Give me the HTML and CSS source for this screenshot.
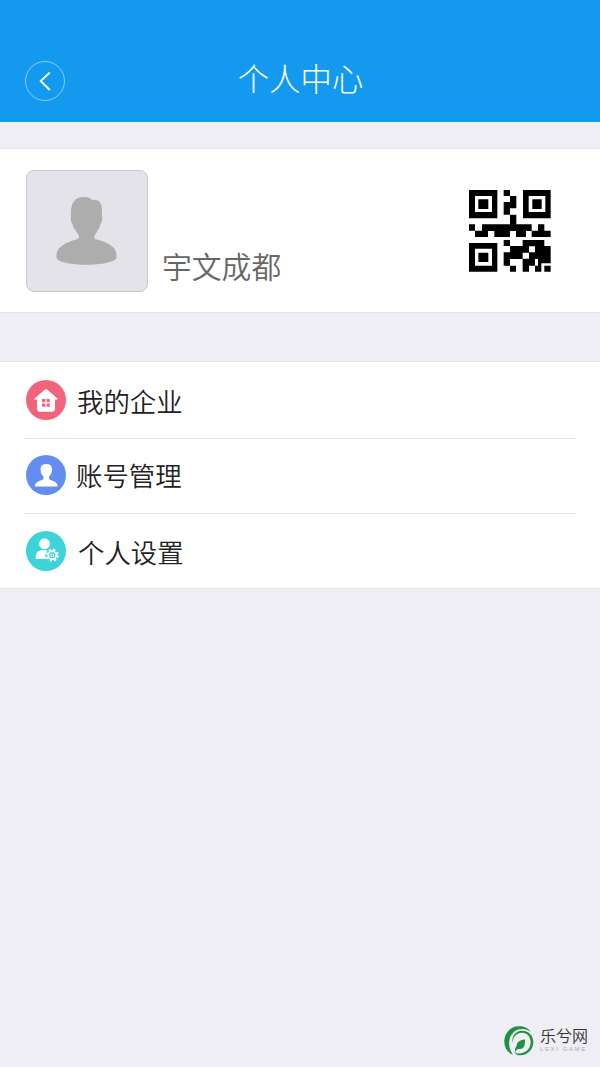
FILE: index.html
```
<!DOCTYPE html>
<html lang="zh-CN">

<head>
    <meta charset="UTF-8">
    <meta name="viewport" content="width=device-width, initial-scale=1.0">
    <title>个人中心</title>
    <link rel="stylesheet" href="styles.css">
</head>

<body>
    <header class="header">
        <a class="back" href="#">
            <svg viewBox="0 0 40 40"><path d="M25 11L15.5 20L25 29.5" /></svg>
        </a>
        <h1>个人中心</h1>
    </header>

    <section class="profile">
        <div class="avatar">
            <svg viewBox="27 11 120 120">
                <path d="M78 79Q80 77 78 74L74.5 69Q73 67 72.5 64Q70 61 71 57C70 44 74 37 84 37C88 37 91 38 92 40C99 39 102 43 102 51V56Q103 61 100.5 64Q100 67 98.5 69L95 75Q93.5 77 95 79C108 82 116.5 87 116.5 95V98C113 107 60 107 56.5 98V95C56.5 87 66 82 78 79Z" />
            </svg>
        </div>
        <p class="name">宇文成都</p>
        <svg class="qrcode" viewBox="27 30 246 246">
            <!-- 三个定位角 -->
            <path fill-rule="evenodd" d="M27 30H112V115H27ZM45 48V96H96V48ZM55 58H85V87H55Z" />
            <path fill-rule="evenodd" d="M189 30H272V115H189ZM206 48V96H256V48ZM217 58H245V87H217Z" />
            <path fill-rule="evenodd" d="M27 189H112V275H27ZM45 206V257H96V206ZM55 218H85V246H55Z" />
            <path d="M131 30h19v18h-19zM150 48h19v19h-19zM131 66h19v38h-19zM150 66h19v19h-19zM150 104h19v30h-19z" />
            <path d="M27 133h18v19H27zM66 133h149v20H66zM234 133h19v20h-19zM45 152h39v19H45zM103 152h47v19h-47zM168 152h30v19h-30zM215 152h57v19h-57z" />
            <path d="M131 180h19v18h-19zM188 180h65v19h-65zM150 198h57v20h-57zM225 198h47v20h-47zM131 217h57v20h-57zM207 217h65v20h-65z" />
            <path d="M131 236h19v21h-19zM188 236h37v21h-37zM234 236h38v14h-38zM234 250h10v25h-10zM150 257h18v18h-18zM188 257h19v18h-19zM225 257h10v18h-10zM253 257h19v18h-19z" />
        </svg>
    </section>

    <ul class="menu">
        <li>
            <svg class="icon" viewBox="0 0 40 40">
                <circle cx="20" cy="20" r="20" fill="#f1647b" />
                <path fill="#fff" d="M19 9.5Q20 8.6 21 9.5L31.4 18.4Q32.2 19.6 30.6 19.6H29V28.5Q29 31.8 25.8 31.8H14.2Q11 31.8 11 28.5V19.6H9.4Q7.8 19.6 8.6 18.4Z" />
                <path fill="#f1647b" d="M16 19h3.3v3.3H16zM20.5 19h3.3v3.3h-3.3zM16 23.4h3.3v3.3H16zM20.5 23.4h3.3v3.3h-3.3z" />
            </svg>
            <span>我的企业</span>
        </li>
        <li class="account">
            <svg class="icon" viewBox="0 0 40 40">
                <circle cx="20" cy="20" r="20" fill="#638ef0" />
                <path fill="#fff" d="M17.5 24V21.5C15.5 20 15.2 18 14.8 16.5C14 12 15.5 9 20.3 9S26.6 12 25.8 16.5C25.4 18 25 20 23.1 21.5V24C25 26 31.8 26 31.8 31.5H8.8C8.8 26 15.6 26 17.5 24Z" />
            </svg>
            <span>账号管理</span>
        </li>
        <li class="setting">
            <svg class="icon" viewBox="0 0 40 40">
                <circle cx="20" cy="20" r="20" fill="#3dd3d9" />
                <circle cx="18.5" cy="12.7" r="5.4" fill="#fff" />
                <path fill="#fff" d="M14.5 19.3H21.5Q19 22.4 19.4 24.8Q19.7 27 21.2 28H9.8C9.4 23.6 11 20 14.5 19.3Z" />
                <circle cx="26.3" cy="24.2" r="5.5" fill="none" stroke="#fff" stroke-width="1.8" stroke-dasharray="2.4 1.92" />
                <circle cx="26.3" cy="24.2" r="4" fill="none" stroke="#fff" stroke-width="1.7" />
                <circle cx="26.3" cy="24.2" r="1.5" fill="none" stroke="#fff" stroke-width="1" />
            </svg>
            <span>个人设置</span>
        </li>
    </ul>

    <footer class="logo">
        <svg viewBox="0 0 30 30">
            <path d="M9 28.8C3 26.5 0 21 .3 14.5C.8 6 7.5 .3 15 .3C20 .3 24.5 2.3 27 6C22 2.2 14 2 9.5 6.2C3.6 12 3.8 22 9 28.8Z" />
            <path d="M8.6 17C7.2 10 12 4.7 18 4.7C24.5 4.7 29.3 9.5 29.3 16C29.3 23.5 23.5 29.3 16.5 29.3C13.4 29.3 11 27.8 10 25.4C12.2 27.2 14.5 27.8 17 27.3C22.6 26.5 26.8 21.8 26.7 16C26.6 10.5 22.8 6.7 17.8 6.8C12.4 6.9 8.8 11 8.6 17Z" />
            <path d="M20.8 13.2C21.4 18.5 20.3 23 15.8 23C14.2 23 13.6 22.5 12.8 23.6L11.3 26C10.5 23.5 11.3 21.5 12.6 20.2C12.6 16 16 14.3 20.8 13.2Z" />
        </svg>
        <div class="logo-text">
            <strong>乐兮网</strong>
            <small>LEXI GAME</small>
        </div>
    </footer>
</body>

</html>
```

FILE: styles.css
```
* {
    padding: 0;
    margin: 0;
    box-sizing: border-box;
}

body {
    display: flex;
    flex-direction: column;
    height: 1067px;
    background-color: #efeef4;
    font-family: "Noto Sans CJK SC", sans-serif;
    font-weight: 300;
}

svg {
    display: block;
}

.header {
    display: grid;
    grid-template-columns: 40px 1fr 40px;
    align-items: center;
    height: 122px;
    padding: 40px 25px 0;
    background-color: #139aef;
    color: #fff;
}

.back {
    height: 40px;
    border: 1px solid #89ccf7;
    border-radius: 50%;
}

.back path {
    fill: none;
    stroke: #fff;
    stroke-width: 2;
}

h1 {
    padding: 0 0 7px 1px;
    font-size: 31.4px;
    font-weight: 300;
    text-align: center;
}

.profile {
    display: flex;
    height: 165px;
    margin-top: 26px;
    padding: 21px 49px 0 26px;
    border-top: 1px solid #e3e2e6;
    border-bottom: 1px solid #e3e2e6;
    background-color: #fff;
}

.avatar {
    width: 122px;
    height: 122px;
    border: 1px solid #c9c9cc;
    border-radius: 8px;
    background-color: #e4e3e9;
}

.avatar path {
    fill: #adadad;
}

.name {
    margin: 73px 0 0 14px;
    font-size: 29.8px;
    font-weight: 350;
    color: #666;
}

.qrcode {
    width: 82px;
    height: 82px;
    margin: 20px 0 0 auto;
}

.menu {
    height: 228px;
    margin-top: 48px;
    padding: 0 25px;
    border-top: 1px solid #e3e2e6;
    border-bottom: 1px solid #e3e2e6;
    background-color: #fff;
    list-style: none;
}

.menu li {
    display: flex;
    align-items: center;
    height: 76px;
    padding: 0 0 1px 1px;
    font-size: 26.4px;
    font-weight: 350;
    color: #222;
}

.menu li + li {
    height: 75px;
    border-top: 1px solid #e3e3e5;
}

.icon {
    width: 40px;
    height: 40px;
    margin-right: 11px;
}

.menu span {
    padding-top: 1px;
}

.menu .account {
    padding-bottom: 2px;
}

.account .icon {
    margin-right: 10px;
}

.menu .account span {
    padding: 0 0 1px;
}

.setting .icon {
    margin-right: 12px;
}

.logo {
    display: flex;
    align-items: flex-start;
    margin: auto 11px 11px auto;
}

.logo svg {
    width: 30px;
    height: 30px;
    margin-right: 6px;
    fill: #1f9140;
}

.logo-text {
    width: 49px;
}

.logo strong {
    display: block;
    font-size: 16px;
    font-weight: 350;
    line-height: 18px;
    color: #333;
}

.logo small {
    display: block;
    padding-top: 2px;
    font-family: "Liberation Sans", Arial, sans-serif;
    font-size: 6px;
    line-height: 7px;
    letter-spacing: 1.6px;
    white-space: nowrap;
    color: #aaa;
}
```
